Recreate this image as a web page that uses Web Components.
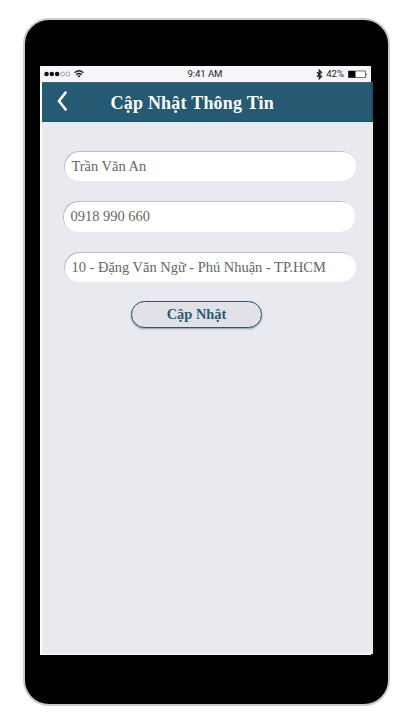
<!DOCTYPE html>
<html lang="vi">
<head>
<meta charset="utf-8">
<title>Cập Nhật Thông Tin</title>
<style>
html,body{margin:0;background:#fff}
body{width:419px;height:723px;overflow:hidden;font-family:"Liberation Serif",serif}
</style>
</head>
<body>
<phone-frame>
  <status-bar></status-bar>
  <app-screen>
    <title-bar>Cập Nhật Thông Tin</title-bar>
    <profile-form>
      <text-field>Trần Văn An</text-field>
      <text-field class="phone">0918 990 660</text-field>
      <text-field class="address">10 - Đặng Văn Ngữ - Phú Nhuận - TP.HCM</text-field>
      <submit-button>Cập Nhật</submit-button>
    </profile-form>
  </app-screen>
</phone-frame>
<script>
function define(name, html) {
  const t = document.createElement('template');
  t.innerHTML = html;
  customElements.define(name, class extends HTMLElement {
    constructor() {
      super();
      this.attachShadow({mode: 'open'}).append(t.content.cloneNode(true));
    }
  });
}

define('phone-frame', `<style>
:host{display:block;box-sizing:border-box;width:367px;height:688px;margin:18px 0 0 23px;border:2px solid #cbcbcb;border-radius:26px;background:#000;padding:46px 0 0 15px}
.display{width:331px;height:589px;background:#fdfdfe}
</style><div class="display"><slot></slot></div>`);

define('status-bar', `<style>
:host{display:flex;box-sizing:border-box;height:16px;width:331px;background:#f5f5fa;color:#222;font:9.6px/16px Roboto,sans-serif;align-items:center}
.left,.right{flex:1;display:flex;align-items:center}
svg{display:block}
.left{padding-left:4px}
.time{width:36px;white-space:nowrap;letter-spacing:-.1px;padding-right:1px}
.right{justify-content:flex-end;padding-right:3px}
.pct{margin:0 4px 0 3px;letter-spacing:0}
</style>
<div class="left"><svg width="42" height="12" viewBox="0 0 42 12">
<g fill="#111"><circle cx="2.5" cy="6" r="2.25"/><circle cx="7.8" cy="6" r="2.25"/><circle cx="13.1" cy="6" r="2.25"/></g>
<g fill="none" stroke="#777" stroke-width=".6"><circle cx="18.5" cy="6" r="2"/><circle cx="23.7" cy="6" r="2"/></g>
<g fill="none" stroke="#222" stroke-width="1.4"><path d="M30.6 4.8Q35 .9 39.4 4.8M32.3 6.7Q35 4.4 37.7 6.7"/></g><path d="M33.3 7.8Q35 6.7 36.7 7.8L35 9.4z" fill="#222"/></svg></div>
<div class="time">9:41 AM</div>
<div class="right"><svg width="7" height="11" viewBox="0 0 7 11"><path d="M1 3.2L5.5 7.5L3.3 9.7V1.2L5.5 3.4L1 7.7" fill="none" stroke="#222" stroke-width="1.3"/></svg>
<span class="pct">42%</span>
<svg width="20" height="9" viewBox="0 0 20 9"><rect x=".5" y="1" width="17" height="6.6" fill="#fff" stroke="#555" stroke-width=".8"/><path d="M.5 1h7v6.6h-7z" fill="#000"/><path d="M18 3.2q1.8 1.1 0 2.2z" fill="#333"/></svg></div>`);

define('app-screen', `<style>
:host{display:block;width:331px;height:572px;margin-left:2px;background:#e9eaf0}
</style><slot></slot>`);

define('title-bar', `<style>
:host{display:flex;box-sizing:border-box;height:40px;width:331px;background:#265a72;color:#fff;align-items:center;border-top:1px solid #376880;border-bottom:1px solid #1d5069;border-right:2px solid #1d5069;padding-left:15px}
svg{display:block;flex:none;margin-top:-2px}
h1{margin:0 0 0 41.5px;font:bold 18px/24px "Liberation Serif",serif;letter-spacing:.22px;white-space:nowrap;padding-top:2px}
</style><svg width="12" height="22" viewBox="0 0 12 22"><path d="M9.2 1.8L2 11L9.2 20.2" fill="none" stroke="#fff" stroke-width="2.6"/></svg><h1><slot></slot></h1>`);

define('profile-form', `<style>
:host{display:flex;flex-direction:column;padding:29px 0 0 22px;align-items:flex-start}
::slotted(.phone){margin:20px 0 0 -1px;height:31px!important}
::slotted(.address){margin-top:20px}
::slotted(submit-button){margin:19px 0 0 67px}
</style><slot></slot>`);

define('text-field', `<style>
:host{display:block;box-sizing:border-box;width:292px;height:30px;border-radius:15px;background:#fff;box-shadow:inset 1px 1px 0 #c0c0c0;padding-left:7.5px;color:#666;font:14.45px/30px "Liberation Serif",serif;white-space:nowrap}
</style><slot></slot>`);

define('submit-button', `<style>
:host{display:block;width:131px;height:27px}
button{display:block;box-sizing:border-box;width:131px;height:27px;margin:0;padding:0;border:1px solid #265a72;border-radius:14px;background:#e0e2e7;color:#265a72;font:bold 14.4px/25px "Liberation Serif",serif;box-shadow:0 1px 2px #8b99a3}
</style><button><slot></slot></button>`);
</script>
</body>
</html>
